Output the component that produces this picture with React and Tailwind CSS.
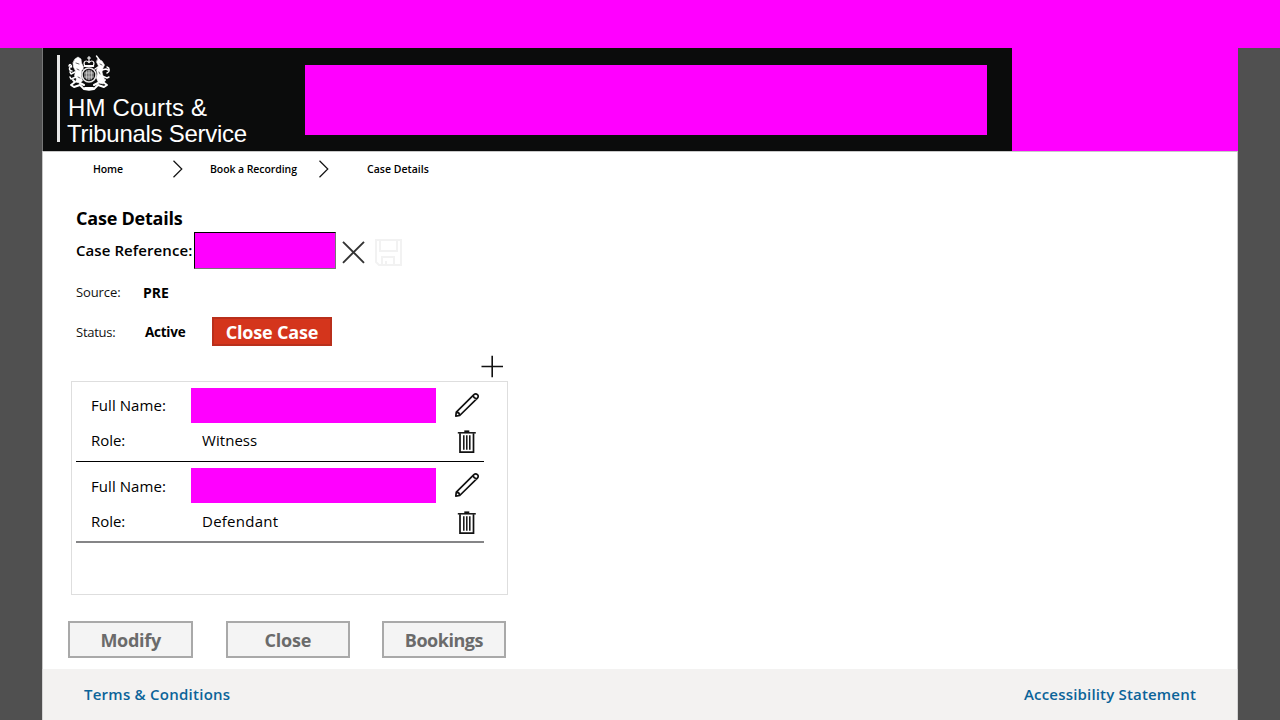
const OPEN_SANS = "font-['Open_Sans','Noto_Sans',sans-serif]";

function Crest() {
  return (
    <svg className="block h-[38px] w-[44px]" viewBox="0 0 44 38" fill="none" stroke="#fff" strokeLinecap="round" strokeLinejoin="round">
      <circle cx="22" cy="20" r="7" strokeWidth="1.6" stroke="#e8e8e8" />
      <circle cx="22" cy="20" r="5" fill="#777" stroke="none" />
      <path d="M22 15v10M17.5 18h9M17.5 22h9M19.5 16v8M24.5 16v8" strokeWidth=".6" stroke="#e0e0e0" />
      <path d="M17.500 10.500c-1.500-4 1.500-6 4.500-3 3-3 6-1 4.500 3zM22 1.500v6M20.500 3h3" strokeWidth="1.200" />
      <path d="M17.500 11.300h9" strokeWidth="1.400" />
      <path d="M8 4l3-2 3 2 .5 4 2 4-2 4-.500 5 1.500 5-3 2-4-1 1-3-2-3 1-5-2-4-.500-4z" fill="#fff" strokeWidth=".6" />
      <path d="M8 17l-4 2-1-2M9 22l-5 2-1-2M13 12l3 2M4 11c-3 3-1 5 1 5M4.500 12c0-3-2-3-2.500-1" strokeWidth="1.500" />
      <path d="M31 4l4 2 2.500 4-1.500 3-1 4 1 4 1.500 3-2 3 1 2-5-1-2-5 1-4-1-4 2-4-2-4z" fill="#fff" strokeWidth=".6" />
      <path d="M29.500 1l3 4M31 12l-3 2M35 15l4-1 2 1M35 21l5 2 2-1M40 18c3-1 3-5 0-6" strokeWidth="1.400" />
      <path d="M6 25l2 2-4 3 3 2 6-2 4 4 5 .800 5-.800 4-4 6 2 3-2-4-3 2-2" strokeWidth="1.900" />
      <path d="M13 28l4 2M31 28l-4 2M18 33h8" strokeWidth="2" />
      <path d="M9 8l3 1M10 14l2 1M33 9l2 1M32 17l1 2M11 22l2 1" stroke="#555" strokeWidth=".9" />
    </svg>
  );
}

function Chevron() {
  return (
    <svg className="block h-[18px] w-[12px] shrink-0" viewBox="0 0 12 18" fill="none" stroke="#111" strokeWidth="1.200">
      <path d="M1.500 .8 9.800 9l-8.300 8.200" />
    </svg>
  );
}

function Pencil() {
  return (
    <svg className="block h-[26px] w-[26px]" viewBox="0 0 26 26" fill="none" stroke="#111" strokeWidth="1.700" strokeLinejoin="round">
      <path d="M1.800 24.200 2.300 20.200 19.900 2.700c1.200-1.200 2.400-1.100 3.500-.1s1.100 2.300 0 3.500L5.700 23.500zM2.300 20.200c1.900.1 3.200 1.300 3.400 3.300M19.300 3.300c0 2 1.300 3.300 3.500 3.300" />
    </svg>
  );
}

function Trash() {
  return (
    <svg className="block h-[24px] w-[20px]" viewBox="0 0 20 24" fill="none" stroke="#111">
      <path d="M.8 2.800h18" strokeWidth="1.500" />
      <path d="M7.300 1.500h5" strokeWidth="2.200" />
      <path d="M3 3.200v18.900h13.500V3.200" strokeWidth="1.700" />
      <path d="M6.800 5.200v14.500M9.800 5.200v14.500M12.800 5.200v14.500" strokeWidth="1.500" />
    </svg>
  );
}

function Participant({ role, last }) {
  return (
    <div className={last ? "flex h-[81px] w-[408px] border-b-2 border-[#858587]" : "flex h-[80px] w-[408px] border-b border-black"}>
      <div className="w-[115px] pl-[15px] text-[15px] text-black">
        <div className={last ? "mt-[6px] h-[35px] leading-[36px] tracking-[0.070px]" : "mt-[6px] h-[35px] leading-[34px] tracking-[0.070px]"}>Full Name:</div>
        <div className={last ? "h-[35px] leading-[37px] tracking-[-0.050px]" : "h-[35px] leading-[35px] tracking-[-0.050px]"}>Role:</div>
      </div>
      <div className="w-[245px] pt-[6px]">
        <div className="h-[35px] bg-[#ff00ff]" />
        <div className={last ? "h-[35px] pl-[11px] text-[15px] leading-[37px] tracking-[0.250px] text-black" : "h-[35px] pl-[11px] text-[15px] leading-[35px] tracking-[0.050px] text-black"}>{role}</div>
      </div>
      <div className="flex flex-col pl-[18px] pt-[10px]">
        <Pencil />
        <div className={last ? "ml-[3px] mt-[13px]" : "ml-[3px] mt-[12px]"}>
          <Trash />
        </div>
      </div>
    </div>
  );
}

function ActionButton({ children, className }) {
  return (
    <button className={"h-[37px] border-2 border-[#a9a9a9] bg-[#f4f4f4] text-[18px] font-bold leading-[35px] text-[#6b6b6b] " + className}>
      <span className="block h-[33px]">{children}</span>
    </button>
  );
}

export default function App() {
  return (
    <div className={"flex h-[720px] w-[1280px] flex-col overflow-hidden bg-[#505050] text-black " + OPEN_SANS}>
      <div className="h-[48px] shrink-0 bg-[#ff00ff]" />
      <div className="mx-[42px] flex h-[672px] w-[1196px] flex-col bg-white">
        <header className="flex h-[103px] shrink-0 border-l border-[#777] bg-[#0b0c0c]">
          <div className="flex w-[262px] pl-[14px] pt-[7px]">
            <div className="h-[87px] w-[2.500px] bg-[#e6e6e6]" />
            <div className="pl-[7.500px] text-white">
              <Crest />
              <div className="mt-[2px] whitespace-nowrap pl-[1px] font-['Liberation_Sans',Arial,sans-serif] text-[24px] leading-[26px]">
                <div className="tracking-[0.160px]">HM Courts &amp;</div>
                <div className="-ml-[1px] tracking-[-0.280px]">Tribunals Service</div>
              </div>
            </div>
          </div>
          <div className="mt-[17px] h-[70px] w-[682px] bg-[#ff00ff]" />
          <div className="ml-auto h-[103px] w-[226px] bg-[#ff00ff]" />
        </header>

        <main className="flex h-[518px] shrink-0 flex-col border-x border-t border-[#c8c8c8]">
          <nav className="flex h-[34px] items-center text-[10.500px] font-semibold leading-[16px]">
            <span className="ml-[50px] w-[79px] tracking-[-0.100px]">Home</span>
            <Chevron />
            <span className="ml-[26px] w-[108px] whitespace-nowrap tracking-[-0.080px]">Book a Recording</span>
            <Chevron />
            <span className="ml-[37px] tracking-[0.020px]">Case Details</span>
          </nav>

          <h1 className="ml-[33px] mt-[18px] h-[28px] text-[18px] font-bold leading-[28px] tracking-[-0.220px]">Case Details</h1>

          <div className="ml-[33px] flex h-[37px]">
            <label className="w-[118px] whitespace-nowrap text-[15px] font-semibold leading-[37px] tracking-[0.080px]">Case Reference:</label>
            <div className="h-[37px] w-[142px] border border-b-[#777] border-l-black border-r-[#777] border-t-black bg-[#ff00ff]" />
            <svg className="ml-[6px] mt-[8px] block h-[24px] w-[24px]" viewBox="0 0 24 24" stroke="#333" strokeWidth="1.900">
              <path d="M1 1.800l21 21M22 1.800l-21 21" />
            </svg>
            <svg className="ml-[8px] mt-[6px] block h-[29px] w-[29px]" viewBox="0 0 29 29" fill="none" stroke="#f2f2f2" strokeWidth="1.900">
              <path d="M2 2h25v25H5l-3-3zM6 2v11h17V2M8 27v-8h12v8M12 27v-4" />
            </svg>
          </div>

          <div className="ml-[33px] mt-[7px] flex h-[34px] items-center">
            <span className="w-[67px] text-[13px] tracking-[-0.100px] text-[#111]">Source:</span>
            <span className="h-[21px] text-[14px] font-bold leading-[19px]">PRE</span>
          </div>

          <div className="ml-[33px] mt-[7px] flex h-[29px] items-center">
            <span className="mt-[2px] w-[69px] text-[13px] tracking-[-0.250px] text-[#111]">Status:</span>
            <span className="mt-[2px] w-[67px] text-[13.500px] font-bold tracking-[-0.250px]">Active</span>
            <button className="h-[29px] w-[120px] border-2 border-[#b92f1b] bg-[#d4351c] text-[18px] font-bold leading-[27px] tracking-[-0.180px] text-white">
              <span className="block h-[25px]">Close Case</span>
            </button>
          </div>

          <svg className="ml-[438px] mt-[9px] block h-[23px] w-[23px] shrink-0" viewBox="0 0 23 23" stroke="#111" strokeWidth="1.600">
            <path d="M11.200 .8v21.500M.5 11.500h21.500" />
          </svg>

          <section className="ml-[28px] mt-[3px] h-[214px] w-[437px] shrink-0 border border-[#dedede] pl-[4px]">
            <Participant role="Witness" />
            <Participant role="Defendant" last />
          </section>

          <div className="ml-[25.400px] mt-[26px] flex shrink-0">
            <ActionButton className="mr-[33px] w-[124.500px] tracking-[-0.300px]">Modify</ActionButton>
            <ActionButton className="mr-[32px] w-[124px] tracking-[-0.200px]">Close</ActionButton>
            <ActionButton className="w-[124px] tracking-[-0.480px]">Bookings</ActionButton>
          </div>
        </main>

        <footer className="flex h-[51px] shrink-0 justify-between border-x border-[#d4d4d4] bg-[#f3f2f1] px-[41px] text-[15px] font-semibold leading-[51px] text-[#0b6499]">
          <a className="tracking-[0.250px]">Terms &amp; Conditions</a>
          <a className="tracking-[0.180px]">Accessibility Statement</a>
        </footer>
      </div>
    </div>
  );
}
